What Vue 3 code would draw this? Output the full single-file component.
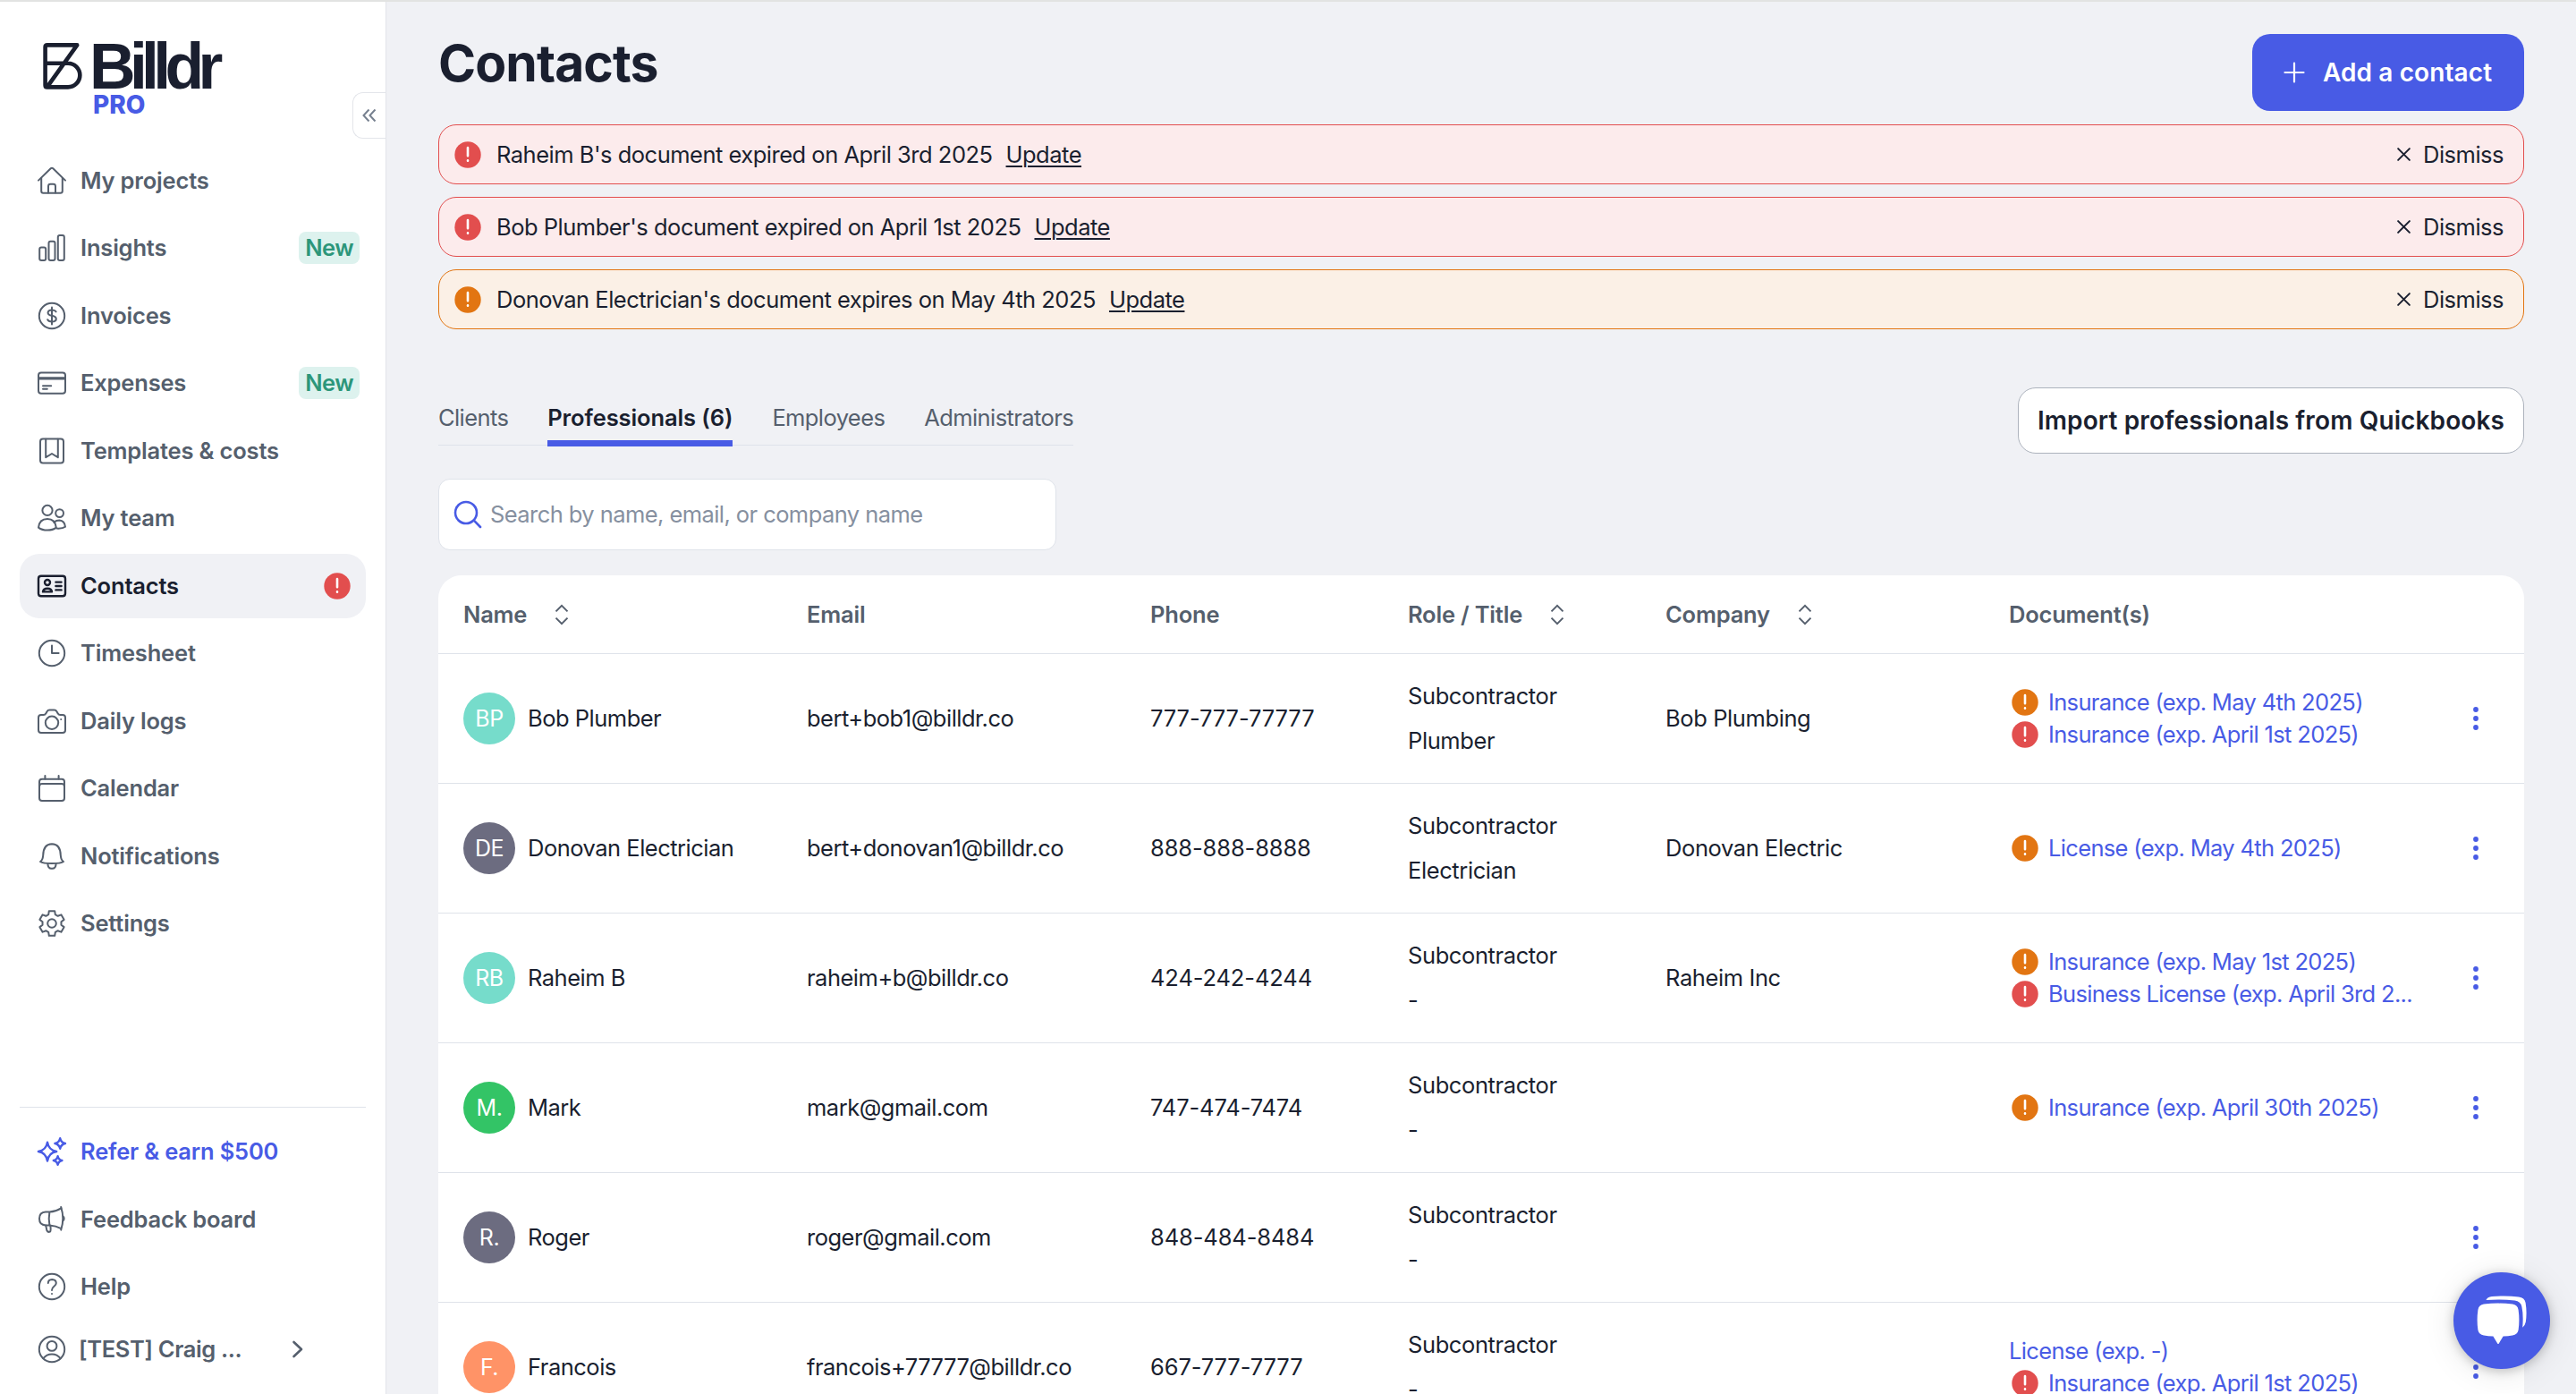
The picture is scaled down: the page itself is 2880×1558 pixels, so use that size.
<template>
  <div class="app">
    <!-- Sidebar -->
    <aside class="sidebar">
      <div class="logo">
        <svg class="logo-mark" viewBox="0 0 44 52" fill="none" stroke="currentColor" stroke-width="4.6" stroke-linejoin="round">
          <path d="M2.6 22.7V4.6Q2.6 2.4 4.8 2.4H38.2L4.6 49.4H28A13.35 13.35 0 0 0 28 22.7H2.6V47.2Q2.6 49.4 4.6 49.4" />
        </svg>
        <div class="logo-words">
          <span class="logo-name">Billdr</span>
          <span class="logo-pro">PRO</span>
        </div>
      </div>
      <button class="collapse">
        <svg viewBox="0 0 16 16" fill="none" stroke="currentColor" stroke-width="2">
          <path d="M7.5 1.5L1.5 8l6 6.5M14.5 1.5L8.5 8l6 6.5" />
        </svg>
      </button>

      <nav class="nav">
        <a v-for="item in navItems" :key="item.label" class="nav-item" :class="{ active: item.active }">
          <svg class="nav-icon" viewBox="0 0 32 32">
            <path v-for="(d, i) in icons[item.icon]" :key="i" :d="d" />
          </svg>
          <span class="nav-label">{{ item.label }}</span>
          <span v-if="item.isNew" class="badge-new">New</span>
          <svg v-if="item.alert" class="alert-dot red" viewBox="0 0 30 30">
            <circle cx="15" cy="15" r="14.7" />
            <path d="M15 7v9.2M15 21.4v.4" />
          </svg>
        </a>
      </nav>

      <nav class="nav nav-bottom">
        <a v-for="item in bottomItems" :key="item.label" class="nav-item" :class="{ accent: item.accent }">
          <svg class="nav-icon" viewBox="0 0 32 32">
            <path v-for="(d, i) in icons[item.icon]" :key="i" :d="d" />
          </svg>
          <span class="nav-label">{{ item.label }}</span>
        </a>
        <a class="nav-item account">
          <svg class="nav-icon" viewBox="0 0 32 32">
            <path v-for="(d, i) in icons.user" :key="i" :d="d" />
          </svg>
          <span class="nav-label">[TEST] Craig ...</span>
          <svg class="account-arrow" viewBox="0 0 14 20">
            <path d="M2.5 2l8.5 8-8.5 8" />
          </svg>
        </a>
      </nav>
    </aside>

    <!-- Page -->
    <main class="main">
      <header class="page-header">
        <h1>Contacts</h1>
        <button class="btn-primary">
          <svg viewBox="0 0 24 24"><path d="M12 1.5v21M1.5 12h21" /></svg>
          <span>Add a contact</span>
        </button>
      </header>

      <div class="alerts">
        <div v-for="alert in alerts" :key="alert.text" class="alert" :class="alert.level">
          <svg class="alert-dot" :class="alert.level" viewBox="0 0 30 30">
            <circle cx="15" cy="15" r="14.7" />
            <path d="M15 7v9.2M15 21.4v.4" />
          </svg>
          <span class="alert-text">{{ alert.text }}</span>
          <a class="alert-link">Update</a>
          <button class="dismiss">
            <svg viewBox="0 0 16 16"><path d="M1.2 1.2l13.6 13.6M14.8 1.2L1.2 14.8" /></svg>
            <span>Dismiss</span>
          </button>
        </div>
      </div>

      <div class="toolbar">
        <div class="tabs">
          <a v-for="tab in tabs" :key="tab" class="tab" :class="{ selected: tab === activeTab }" @click="activeTab = tab">{{ tab }}</a>
        </div>
        <button class="btn-outline">Import professionals from Quickbooks</button>
      </div>

      <label class="search">
        <svg viewBox="0 0 32 32"><path d="M26 14A12 12 0 1 1 2 14A12 12 0 1 1 26 14M22.6 22.4L30 30" /></svg>
        <input v-model="query" placeholder="Search by name, email, or company name" />
      </label>

      <section class="table">
        <div class="row head">
          <div v-for="col in columns" :key="col.label" class="cell">
            <span>{{ col.label }}</span>
            <svg v-if="col.sortable" class="sort" viewBox="0 0 16 24">
              <path d="M1.5 8.4L8 1.9l6.5 6.5M1.5 15.6L8 22.1l6.5-6.5" />
            </svg>
          </div>
        </div>
        <div v-for="person in people" :key="person.email" class="row">
          <div class="cell name">
            <span class="avatar" :class="person.color">{{ person.initials }}</span>
            <span>{{ person.name }}</span>
          </div>
          <div class="cell">{{ person.email }}</div>
          <div class="cell phone">{{ person.phone }}</div>
          <div class="cell role">
            <span>Subcontractor</span>
            <span>{{ person.title }}</span>
          </div>
          <div class="cell company">{{ person.company }}</div>
          <div class="cell docs">
            <div v-for="doc in person.docs" :key="doc.text" class="doc">
              <svg v-if="doc.level" class="alert-dot" :class="doc.level" viewBox="0 0 30 30">
                <circle cx="15" cy="15" r="14.7" />
                <path d="M15 7v9.2M15 21.4v.4" />
              </svg>
              <span class="doc-text">{{ doc.text }}</span>
            </div>
          </div>
          <div class="cell menu">
            <svg viewBox="0 0 6 28">
              <circle cx="3" cy="4" r="2.9" />
              <circle cx="3" cy="14" r="2.9" />
              <circle cx="3" cy="24" r="2.9" />
            </svg>
          </div>
        </div>
      </section>
    </main>

    <button class="chat">
      <svg viewBox="0 0 56 56">
        <path d="M10.4 5Q12 1.4 17 1Q33 -.4 47 1.5Q53.6 2.4 54.6 8Q56.4 19 54.8 29.5Q54 33.6 51.2 35.8Q52.4 22 50.4 12.5Q49.2 6.6 42.5 5.6Q27 3.6 10.4 5Z" />
        <path d="M8 9.6Q24 7.6 40 9.6Q45.6 10.4 46.6 15.9Q48.2 27 46.6 38.6Q45.6 43.6 40 44.6Q35.2 45.4 29.6 45.6L24.8 53.4Q24 54.6 23.2 53.4L18.4 45.6Q12.8 45.4 8 44.6Q2.4 43.6 1.4 38.6Q-.2 27 1.4 15.9Q2.4 10.4 8 9.6Z" />
      </svg>
    </button>
  </div>
</template>

<script setup>
import { ref } from 'vue';

const query = ref('');
const tabs = ['Clients', 'Professionals (6)', 'Employees', 'Administrators'];
const activeTab = ref('Professionals (6)');

// Cog outline with six rounded teeth
function gearPath() {
  const points = [];
  for (let i = 0; i < 6; i++) {
    const base = -90 + i * 60;
    [[-21, 10.6], [-13, 14.2], [13, 14.2], [21, 10.6]].forEach(([offset, r]) => {
      const rad = ((base + offset) * Math.PI) / 180;
      points.push(`${(16 + r * Math.cos(rad)).toFixed(2)} ${(16 + r * Math.sin(rad)).toFixed(2)}`);
    });
  }
  return `M${points.join('L')}Z`;
}

const ring = 'M30.2 16A14.2 14.2 0 1 1 1.8 16A14.2 14.2 0 1 1 30.2 16';

const icons = {
  home: [
    'M1 15.6L14.7 2.3Q16 1.1 17.3 2.3L31 15.6',
    'M4.2 13V27.6Q4.2 29.8 6.4 29.8H25.6Q27.8 29.8 27.8 27.6V13',
    'M12 29.6V22.2Q12 19.8 14.4 19.8H17.6Q20 19.8 20 22.2V29.6'
  ],
  chart: [
    'M4.2 15.6H7.2Q9.2 15.6 9.2 17.6V28Q9.2 30 7.2 30H4.2Q2.2 30 2.2 28V17.6Q2.2 15.6 4.2 15.6Z',
    'M14.5 8.8H17.5Q19.5 8.8 19.5 10.8V28Q19.5 30 17.5 30H14.5Q12.5 30 12.5 28V10.8Q12.5 8.8 14.5 8.8Z',
    'M24.8 2H27.8Q29.8 2 29.8 4V28Q29.8 30 27.8 30H24.8Q22.8 30 22.8 28V4Q22.8 2 24.8 2Z'
  ],
  dollar: [ring, 'M20.6 11.4Q19.6 9.4 16 9.4Q11.8 9.6 11.6 12.4Q11.6 14.8 16 15.8Q20.8 16.8 20.8 19.6Q20.6 22.4 16 22.6Q12 22.4 11.2 20.2', 'M16 6.6V25.4'],
  card: [
    'M4 4.4H28Q31 4.4 31 7.4V24.8Q31 27.8 28 27.8H4Q1 27.8 1 24.8V7.4Q1 4.4 4 4.4Z',
    'M1 10.2H31M1 11.6H31',
    'M6 19.2H15.2M6 22.8H10.8'
  ],
  template: [
    'M6 2.6H26Q29 2.6 29 5.6V26.4Q29 29.4 26 29.4H6Q3 29.4 3 26.4V5.6Q3 2.6 6 2.6Z',
    'M9.2 2.8V23.2L16 19L22.8 23.2V2.8'
  ],
  team: [
    'M16.6 7.4A5.6 5.6 0 1 1 5.4 7.4A5.6 5.6 0 1 1 16.6 7.4',
    'M29 10.6A4.4 4.4 0 1 1 20.2 10.6A4.4 4.4 0 1 1 29 10.6',
    'M1 26.6Q2 17 11 17Q19.6 17 20.8 26.6Q17 29.6 11 29.6Q5 29.6 1 26.6Z',
    'M18.4 20.8Q20.8 18.6 24.4 18.6Q30.2 19 31 25.8Q28 28 21.4 27.6'
  ],
  contacts: [
    'M4 4.8H28Q31 4.8 31 7.8V24.2Q31 27.2 28 27.2H4Q1 27.2 1 24.2V7.8Q1 4.8 4 4.8Z',
    'M14 12A3 3 0 1 1 8 12A3 3 0 1 1 14 12',
    'M6 22.4Q6.4 18.8 11 18.8Q15.6 18.8 16 22.4Z',
    'M20.4 11.6H26.6M20.4 16H26.6M20.4 20.4H26.6'
  ],
  clock: [ring, 'M16 7.4V16H23.6'],
  camera: [
    'M4 9H6.6Q8.4 9 9.4 7.2L10.4 5.4Q11.4 3.6 13.4 3.6H18.6Q20.6 3.6 21.6 5.4L22.6 7.2Q23.6 9 25.4 9H28Q31 9 31 12V26Q31 29 28 29H4Q1 29 1 26V12Q1 9 4 9Z',
    'M23.2 17.8A7.2 7.2 0 1 1 8.8 17.8A7.2 7.2 0 1 1 23.2 17.8',
    'M26.2 14V14.1'
  ],
  calendar: [
    'M5 5.8H27Q30 5.8 30 8.8V27Q30 30 27 30H5Q2 30 2 27V8.8Q2 5.8 5 5.8Z',
    'M2.2 13.4Q2.4 11 5 11H27Q29.6 11 29.8 13.4M8.4 2V5.6M23.6 2V5.6'
  ],
  bell: [
    'M3 22Q5.8 20.4 6.2 15Q6.4 2.4 16 2.2Q25.6 2.4 25.8 15Q26.2 20.4 29 22Q26 24 16 24Q6 24 3 22Z',
    'M11.4 24.2Q11.4 29.8 16 29.8Q20.6 29.8 20.6 24.2'
  ],
  gear: [gearPath(), 'M20.8 16A4.8 4.8 0 1 1 11.2 16A4.8 4.8 0 1 1 20.8 16'],
  sparkle: [
    'M11 5.6Q12.4 14.4 21.2 16Q12.4 17.4 11 26.6Q9.6 17.4 .9 16Q9.6 14.4 11 5.6Z',
    'M25.2 1.2Q26.2 6 31 7Q26.2 8 25.2 12.8Q24.2 8 19.4 7Q24.2 6 25.2 1.2Z',
    'M22.6 21.2Q23.4 25.2 27.4 26Q23.4 26.8 22.6 30.8Q21.8 26.8 17.8 26Q21.8 25.2 22.6 21.2Z'
  ],
  megaphone: [
    'M13.4 7.6H9Q2 8 2 15Q2 22 9 22.4H13.4Q12 15 13.4 7.6Q20.4 7.2 26.4 3.4',
    'M13.4 22.4Q20.4 22.8 26.4 26.2M26.2 2Q30.4 15 26.2 27.6M28.6 12.4Q30.6 15 28.6 17.4',
    'M9.2 22.6L10.4 28.2Q11.6 30.6 14 29.6Q15 28.6 14.4 22.8'
  ],
  help: [ring, 'M11.8 12Q12 8.2 16.2 8Q20.6 8.2 20.8 12Q20.8 14 18.4 15.8Q16 17.6 16 20', 'M16 24V24.1'],
  user: [ring, 'M21.4 12.4A5.3 5.3 0 1 1 10.6 12.4A5.3 5.3 0 1 1 21.4 12.4', 'M6.4 26.2Q10 21.4 16 21.4Q22 21.4 25.6 26.2']
};

const navItems = [
  { label: 'My projects', icon: 'home' },
  { label: 'Insights', icon: 'chart', isNew: true },
  { label: 'Invoices', icon: 'dollar' },
  { label: 'Expenses', icon: 'card', isNew: true },
  { label: 'Templates & costs', icon: 'template' },
  { label: 'My team', icon: 'team' },
  { label: 'Contacts', icon: 'contacts', active: true, alert: true },
  { label: 'Timesheet', icon: 'clock' },
  { label: 'Daily logs', icon: 'camera' },
  { label: 'Calendar', icon: 'calendar' },
  { label: 'Notifications', icon: 'bell' },
  { label: 'Settings', icon: 'gear' }
];

const bottomItems = [
  { label: 'Refer & earn $500', icon: 'sparkle', accent: true },
  { label: 'Feedback board', icon: 'megaphone' },
  { label: 'Help', icon: 'help' }
];

const alerts = [
  { text: "Raheim B's document expired on April 3rd 2025", level: 'red' },
  { text: "Bob Plumber's document expired on April 1st 2025", level: 'red' },
  { text: "Donovan Electrician's document expires on May 4th 2025", level: 'orange' }
];

const columns = [
  { label: 'Name', sortable: true },
  { label: 'Email' },
  { label: 'Phone' },
  { label: 'Role / Title', sortable: true },
  { label: 'Company', sortable: true },
  { label: 'Document(s)' }
];

const people = [
  {
    name: 'Bob Plumber', initials: 'BP', color: 'teal', email: 'bert+bob1@billdr.co', phone: '777-777-77777',
    title: 'Plumber', company: 'Bob Plumbing',
    docs: [
      { text: 'Insurance (exp. May 4th 2025)', level: 'orange' },
      { text: 'Insurance (exp. April 1st 2025)', level: 'red' }
    ]
  },
  {
    name: 'Donovan Electrician', initials: 'DE', color: 'slate', email: 'bert+donovan1@billdr.co', phone: '888-888-8888',
    title: 'Electrician', company: 'Donovan Electric',
    docs: [{ text: 'License (exp. May 4th 2025)', level: 'orange' }]
  },
  {
    name: 'Raheim B', initials: 'RB', color: 'teal', email: 'raheim+b@billdr.co', phone: '424-242-4244',
    title: '-', company: 'Raheim Inc',
    docs: [
      { text: 'Insurance (exp. May 1st 2025)', level: 'orange' },
      { text: 'Business License (exp. April 3rd 2...', level: 'red' }
    ]
  },
  {
    name: 'Mark', initials: 'M.', color: 'green', email: 'mark@gmail.com', phone: '747-474-7474',
    title: '-', company: '',
    docs: [{ text: 'Insurance (exp. April 30th 2025)', level: 'orange' }]
  },
  {
    name: 'Roger', initials: 'R.', color: 'slate', email: 'roger@gmail.com', phone: '848-484-8484',
    title: '-', company: '', docs: []
  },
  {
    name: 'Francois', initials: 'F.', color: 'coral', email: 'francois+77777@billdr.co', phone: '667-777-7777',
    title: '-', company: '',
    docs: [
      { text: 'License (exp. -)' },
      { text: 'Insurance (exp. April 1st 2025)', level: 'red' }
    ]
  }
];
</script>

<style>
html,
body {
  margin: 0;
  overflow: hidden;
}
</style>

<style scoped>
.app {
  display: flex;
  box-sizing: border-box;
  width: 100vw;
  height: 100vh;
  overflow: hidden;
  border-top: 2px solid #e2e3e2;
  background: #f0f1f5;
  color: #1a1f2f;
  font-family: Inter, "Liberation Sans", sans-serif;
  font-size: 25.5px;
  line-height: 36px;
  letter-spacing: -0.5px;
}

button {
  padding: 0;
  border: 0;
  background: none;
  color: inherit;
  font: inherit;
  letter-spacing: inherit;
}

svg {
  flex: none;
  overflow: visible;
}

/* Sidebar */
.sidebar {
  position: relative;
  display: flex;
  flex: none;
  flex-direction: column;
  box-sizing: border-box;
  width: 432px;
  padding: 46px 22px 20px;
  border-right: 1px solid #e3e5ea;
  background: #fff;
}

.logo {
  display: flex;
  flex: none;
  gap: 8px;
  height: 118px;
  padding-left: 26px;
}

.logo-mark {
  width: 44px;
  height: 52px;
}

.logo-words {
  display: flex;
  flex-direction: column;
}

.logo-name {
  font-family: "Liberation Sans", Arial, sans-serif;
  font-size: 71.5px;
  font-weight: 700;
  line-height: 53px;
  letter-spacing: -6.7px;
}

.logo-pro {
  padding-left: 4px;
  color: #485be5;
  font-size: 28px;
  font-weight: 800;
  line-height: 32px;
  letter-spacing: 0;
}

.collapse {
  position: absolute;
  top: 101px;
  right: 0;
  display: flex;
  align-items: center;
  box-sizing: border-box;
  width: 37px;
  height: 52px;
  padding-left: 10px;
  border: 1px solid #e3e5ea;
  border-right: 0;
  border-radius: 12px 0 0 12px;
  color: #76808f;
}

.collapse svg {
  width: 16px;
  height: 16px;
}

.nav {
  display: flex;
  flex: none;
  flex-direction: column;
  gap: 4px;
}

.nav-bottom {
  margin-top: auto;
  padding-top: 14px;
  border-top: 1px solid #dfe3ea;
}

.nav-item {
  display: flex;
  align-items: center;
  box-sizing: border-box;
  height: 71.5px;
  padding: 0 7px 0 20px;
  border-radius: 22px;
  color: #555f6d;
  font-weight: 600;
  letter-spacing: -0.18px;
}

.nav-item.active {
  padding-right: 17px;
  background: #f0f1f5;
  color: #1a1f2f;
}

.nav-item.accent {
  color: #485be5;
}

.nav-icon {
  width: 32px;
  height: 32px;
  margin-right: 16px;
  fill: none;
  stroke: currentColor;
  stroke-width: 2;
  stroke-linecap: round;
  stroke-linejoin: round;
}

.active .nav-icon,
.accent .nav-icon {
  stroke-width: 2.4;
}

.nav-label {
  flex: 1;
  white-space: nowrap;
}

.badge-new {
  padding: 0 7px;
  border-radius: 8px;
  background: #ddf2ee;
  color: #2c967a;
  letter-spacing: -0.6px;
}

.account {
  height: 60px;
  letter-spacing: -0.35px;
}

.account .nav-icon {
  margin-right: 14px;
}

.account .nav-label {
  flex: none;
  width: 238px;
}

.account-arrow {
  width: 14px;
  height: 20px;
  fill: none;
  stroke: currentColor;
  stroke-width: 2.6;
  stroke-linecap: round;
  stroke-linejoin: round;
}

.alert-dot {
  width: 30px;
  height: 30px;
  stroke: #fff;
  stroke-width: 2.6;
  stroke-linecap: round;
}

.alert-dot circle {
  stroke: none;
}

.alert-dot.red {
  fill: #e24e4e;
}

.alert-dot.orange {
  fill: #e27512;
}

/* Main area */
.main {
  display: flex;
  flex: 1;
  flex-direction: column;
  min-width: 0;
  padding: 36px 58px 0;
}

.main > * {
  flex: none;
}

.page-header {
  display: flex;
  align-items: flex-start;
  justify-content: space-between;
  height: 101px;
}

h1 {
  margin: 0;
  font-size: 57px;
  font-weight: 700;
  line-height: 66px;
  letter-spacing: -0.9px;
}

.btn-primary {
  display: flex;
  align-items: center;
  box-sizing: border-box;
  width: 304px;
  height: 86px;
  padding-left: 35px;
  gap: 20px;
  border-radius: 20px;
  background: #485be5;
  color: #fff;
  font-size: 28px;
  font-weight: 600;
  letter-spacing: 0.1px;
  white-space: nowrap;
}

.btn-primary svg {
  width: 24px;
  height: 24px;
  stroke: #fff;
  stroke-width: 2.2;
  stroke-linecap: round;
}

.alerts {
  display: flex;
  flex-direction: column;
  gap: 14px;
}

.alert {
  display: flex;
  align-items: center;
  box-sizing: border-box;
  height: 67px;
  padding: 0 22px 0 17px;
  border: 1px solid #e24e4e;
  border-radius: 20px;
  background: #fcebec;
}

.alert.orange {
  border-color: #e27512;
  background: #fbf0e6;
}

.alert-text {
  margin: 0 15px 0 17px;
}

.alert-link {
  text-decoration: underline;
  text-decoration-thickness: 2px;
  text-underline-offset: 3px;
}

.dismiss {
  display: flex;
  align-items: center;
  gap: 14px;
  margin-left: auto;
}

.dismiss svg {
  width: 15px;
  height: 15px;
  stroke: currentColor;
  stroke-width: 2.1;
  stroke-linecap: round;
}

.toolbar {
  display: flex;
  align-items: flex-start;
  justify-content: space-between;
  margin-top: 65px;
}

.tabs {
  display: flex;
  gap: 44px;
  height: 64px;
  border-bottom: 1px solid #dfe3ea;
}

.tab {
  box-sizing: border-box;
  height: 66px;
  padding-top: 16px;
  color: #555f6d;
  letter-spacing: -0.6px;
}

.tab.selected {
  border-bottom: 7px solid #485be5;
  color: #1a1f2f;
  font-weight: 600;
  letter-spacing: -0.1px;
}

.btn-outline {
  box-sizing: border-box;
  width: 566px;
  height: 74px;
  border: 1px solid #adb3bd;
  border-radius: 20px;
  background: #fff;
  font-size: 28px;
  font-weight: 600;
  letter-spacing: 0.12px;
  white-space: nowrap;
}

.search {
  display: flex;
  align-items: center;
  gap: 9px;
  box-sizing: border-box;
  width: 691px;
  height: 80px;
  margin: 28px 0;
  padding: 0 16px;
  border: 1px solid #dfe3ea;
  border-radius: 13px;
  background: #fff;
}

.search svg {
  width: 32px;
  height: 32px;
  fill: none;
  stroke: #485be5;
  stroke-width: 2.6;
  stroke-linecap: round;
}

.search input {
  flex: 1;
  padding: 0;
  border: 0;
  outline: 0;
  background: none;
  font: inherit;
  letter-spacing: -0.57px;
}

.search input::placeholder {
  color: #8690a0;
  opacity: 1;
}

/* Contact table */
.table {
  overflow: hidden;
  border-radius: 26px 26px 0 0;
  background: #fff;
}

.row {
  display: grid;
  grid-template-columns: 384px 384px 288px 288px 384px 510px 1fr;
  align-items: center;
  box-sizing: border-box;
  height: 145px;
  padding-left: 28px;
  border-bottom: 1px solid #dfe3ea;
}

.row.head {
  height: 88px;
  color: #555f6d;
  font-weight: 600;
  letter-spacing: -0.2px;
}

.cell {
  display: flex;
  align-items: center;
  white-space: nowrap;
}

.sort {
  width: 16px;
  height: 24px;
  margin-left: 31px;
  fill: none;
  stroke: currentColor;
  stroke-width: 2;
}

.name {
  gap: 14px;
}

.avatar {
  display: flex;
  align-items: center;
  justify-content: center;
  width: 58px;
  height: 58px;
  border-radius: 50%;
  color: #fff;
  font-size: 25px;
}

.avatar.teal {
  background: #76dccb;
}

.avatar.slate {
  background: #6c6c80;
}

.avatar.green {
  background: #33c466;
}

.avatar.coral {
  background: #ff9367;
}

.phone {
  letter-spacing: -0.12px;
}

.role,
.company {
  letter-spacing: -0.4px;
}

.role {
  flex-direction: column;
  align-items: flex-start;
  gap: 14px;
}

.docs {
  flex-direction: column;
  align-items: flex-start;
  color: #485be5;
  letter-spacing: -0.66px;
}

.doc {
  display: flex;
  align-items: center;
  height: 36px;
}

.doc .alert-dot {
  margin: 0 11px 0 3px;
}

.menu svg {
  width: 6px;
  height: 28px;
  margin-left: 9px;
  fill: #485be5;
}

.chat {
  position: absolute;
  top: 1422px;
  left: 2743px;
  display: flex;
  align-items: center;
  justify-content: center;
  width: 108px;
  height: 108px;
  border-radius: 50%;
  background: #485be5;
  box-shadow: 0 2px 12px rgba(0, 0, 0, 0.22), 0 4px 36px rgba(0, 0, 0, 0.1);
}

.chat svg {
  width: 56px;
  height: 56px;
  fill: #fff;
}
</style>
